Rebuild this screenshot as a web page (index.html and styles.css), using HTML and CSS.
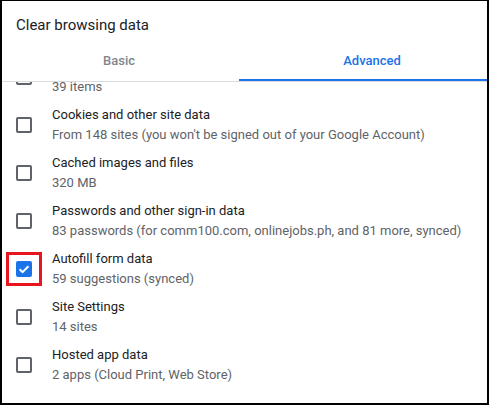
FILE: index.html
```html
<!DOCTYPE html>
<html>
<head>
<meta charset="utf-8">
<link rel="stylesheet" href="styles.css">
</head>
<body>
<div class="dialog">
  <div class="title">Clear browsing data</div>
  <div class="tabs">
    <div class="tab tab-basic">Basic</div>
    <div class="tab tab-adv active">Advanced</div>
  </div>
  <div class="list-viewport">
    <div class="list">
      <div class="item">
        <span class="box"></span>
        <div class="text"><div class="label">Download history</div><div class="sub">39 items</div></div>
      </div>
      <div class="item">
        <span class="box"></span>
        <div class="text"><div class="label">Cookies and other site data</div><div class="sub">From 148 sites (you won't be signed out of your Google Account)</div></div>
      </div>
      <div class="item">
        <span class="box"></span>
        <div class="text"><div class="label">Cached images and files</div><div class="sub">320 MB</div></div>
      </div>
      <div class="item">
        <span class="box"></span>
        <div class="text"><div class="label">Passwords and other sign-in data</div><div class="sub">83 passwords (for comm100.com, onlinejobs.ph, and 81 more, synced)</div></div>
      </div>
      <div class="item">
        <span class="box checked">
          <svg viewBox="0 0 16 16" width="16" height="16"><path d="M3.6 8.2 L6.6 11.1 L12.4 5.2" fill="none" stroke="#fff" stroke-width="2"/></svg>
          <span class="highlight"></span>
        </span>
        <div class="text"><div class="label">Autofill form data</div><div class="sub">59 suggestions (synced)</div></div>
      </div>
      <div class="item">
        <span class="box"></span>
        <div class="text"><div class="label">Site Settings</div><div class="sub">14 sites</div></div>
      </div>
      <div class="item">
        <span class="box"></span>
        <div class="text"><div class="label">Hosted app data</div><div class="sub">2 apps (Cloud Print, Web Store)</div></div>
      </div>
    </div>
  </div>
</div>
</body>
</html>
```
FILE: styles.css
```css
html, body {
  margin: 0;
  padding: 0;
  background: #fff;
}
body {
  font-family: Roboto, "Liberation Sans", sans-serif;
  color: #202124;
}
.dialog {
  width: 489px;
  height: 405px;
  box-sizing: border-box;
  border-style: solid;
  border-color: #000;
  border-width: 1px 2px 2px 2px;
  display: flex;
  flex-direction: column;
  overflow: hidden;
}
.title {
  font-size: 15px;
  line-height: 20px;
  padding: 14px 14px 0;
  height: 26px;
  color: #202124;
}
.tabs {
  display: grid;
  grid-template-columns: 237px 1fr;
  height: 40px;
  border-bottom: 1px solid #dadce0;
  flex: none;
}
.tab {
  font-size: 13px;
  font-weight: 500;
  line-height: 40px;
  text-align: center;
  color: #80868b;
}
.tab-basic {
  padding-right: 3px;
}
.tab-adv {
  padding-left: 18px;
}
.tab.active {
  color: #1a73e8;
  box-shadow: inset 0 -2px 0 #1a73e8;
}
.list-viewport {
  flex: 1;
  overflow: hidden;
}
.list {
  margin-top: -25px;
  display: flex;
  flex-direction: column;
  gap: 8px;
}
.item {
  display: flex;
  align-items: center;
  height: 40px;
  padding-left: 14px;
}
.box {
  position: relative;
  width: 16px;
  height: 16px;
  box-sizing: border-box;
  border: 2px solid #5f6368;
  border-radius: 2px;
  flex: none;
  margin-right: 20px;
}
.box.checked {
  border: none;
  background: #1a73e8;
}
.box svg {
  display: block;
}
.highlight {
  position: absolute;
  left: -10px;
  top: -9px;
  width: 36px;
  height: 34px;
  box-sizing: border-box;
  border: 3px solid #e8141f;
}
.text {
  font-size: 13px;
  line-height: 20px;
  white-space: nowrap;
}
.label {
  color: #202124;
}
.sub {
  color: #5f6368;
}
```
